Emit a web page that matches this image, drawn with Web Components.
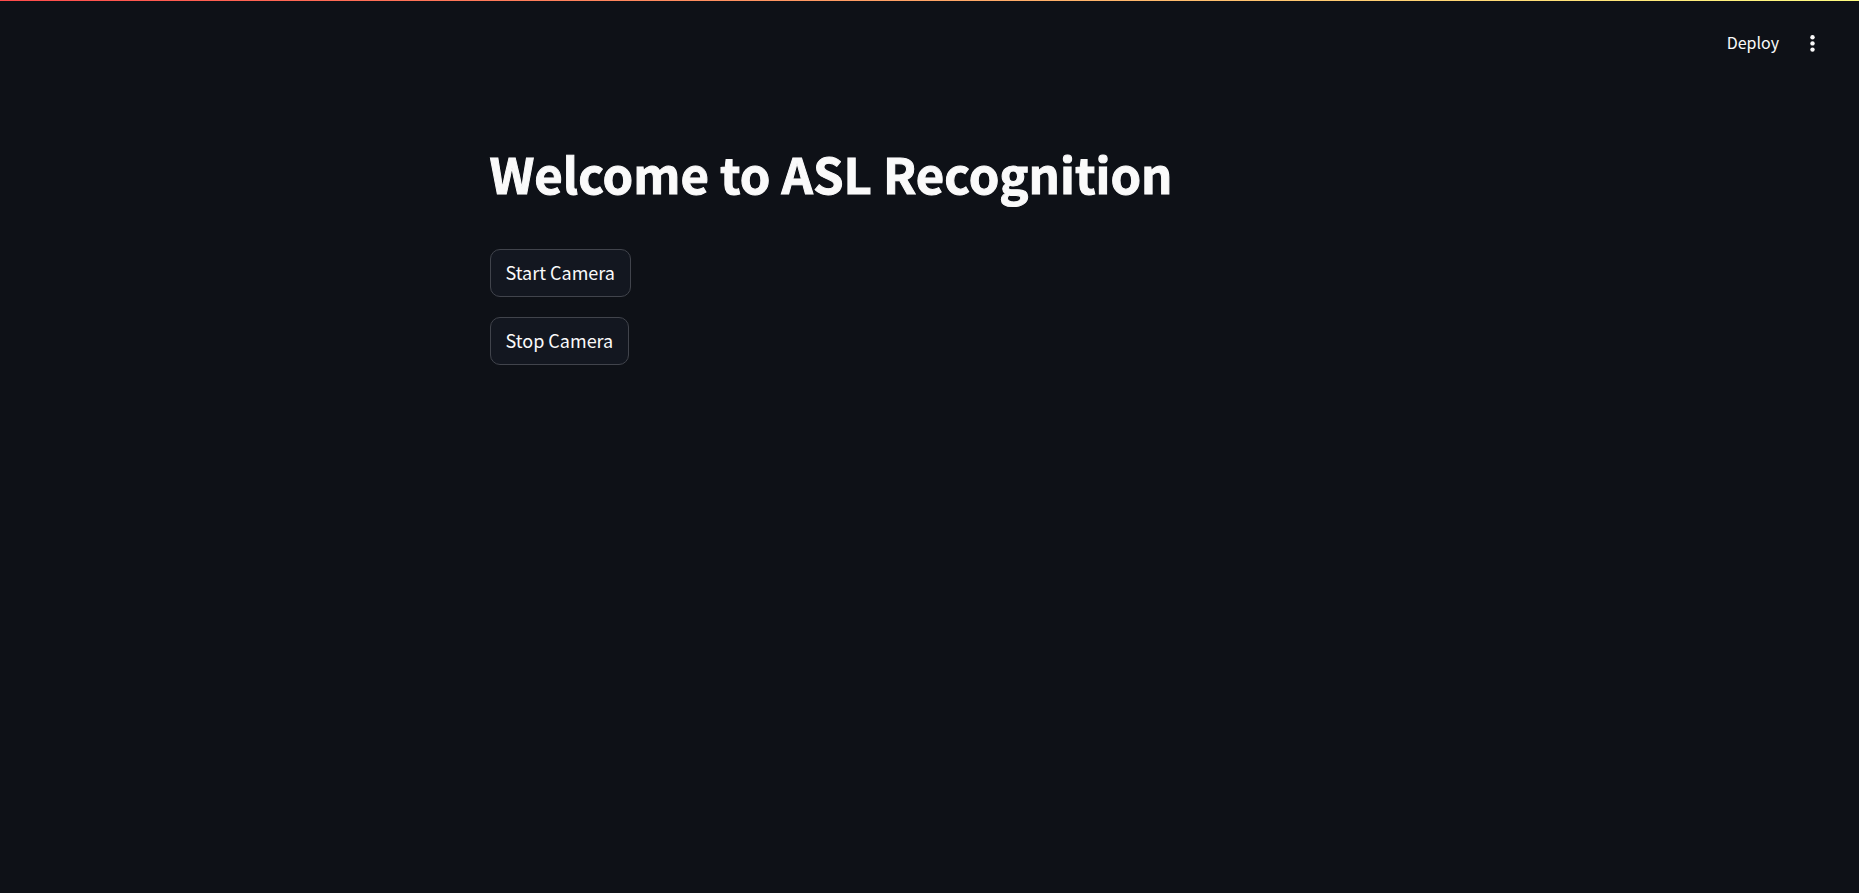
<!DOCTYPE html>
<html lang="en">
<head>
<meta charset="utf-8">
<meta name="viewport" content="width=device-width, initial-scale=1">
<title>ASL Recognition</title>
<style>
  html { background: #0e1117; color-scheme: dark; }
  body { margin: 0; color: #fafafa; font-family: "Source Sans Pro", "Noto Sans CJK SC", sans-serif; }
</style>
</head>
<body>
<app-shell>
  <app-toolbar slot="header"></app-toolbar>
  <page-title>Welcome to ASL Recognition</page-title>
  <action-button>Start Camera</action-button>
  <action-button>Stop Camera</action-button>
</app-shell>
<script>
  class BaseElement extends HTMLElement {
    constructor() {
      super();
      this.attachShadow({ mode: "open" }).innerHTML = this.constructor.markup;
    }
  }

  customElements.define("app-shell", class extends BaseElement {
    static markup = `
      <style>
        :host { display: flex; flex-direction: column; min-height: 100vh; }
        .decoration { height: 1px; background: linear-gradient(90deg, #ff4b4b, #fffd80); }
        main { box-sizing: border-box; width: 100%; max-width: 880px; margin: 0 auto; padding: 56px 0;
               display: flex; flex-direction: column; align-items: flex-start; gap: 20px; }
      </style>
      <div class="decoration"></div>
      <slot name="header"></slot>
      <main><slot></slot></main>`;
  });

  customElements.define("app-toolbar", class extends BaseElement {
    static markup = `
      <style>
        :host { display: block; }
        header { display: flex; align-items: center; justify-content: flex-end; gap: 16px;
                 height: 84px; padding: 0 32px; }
        button { box-sizing: border-box; display: flex; align-items: center; justify-content: center; height: 32px;
                 border: 0; background: none; color: inherit; font: inherit; cursor: pointer; }
        .deploy { padding: 0 4px 2px; font-size: 16px; line-height: 24px; }
        .menu { width: 28px; padding: 0; }
      </style>
      <header>
        <button class="deploy" type="button">Deploy</button>
        <button class="menu" type="button" aria-label="Main menu">
          <svg width="28" height="28" viewBox="0 0 28 28" fill="currentColor" aria-hidden="true">
            <circle cx="13.5" cy="8.3" r="2.2"/><circle cx="13.5" cy="14.4" r="2.2"/><circle cx="13.5" cy="20.6" r="2.2"/>
          </svg>
        </button>
      </header>`;
  });

  customElements.define("page-title", class extends BaseElement {
    static markup = `
      <style>
        :host { display: block; }
        h1 { margin: 0; padding: 0 0 24px; font-size: 49px; line-height: 64px; font-weight: 700;
             -webkit-text-stroke: 1px currentColor; }
      </style>
      <h1><slot></slot></h1>`;
  });

  customElements.define("action-button", class extends BaseElement {
    static markup = `
      <style>
        :host { display: block; }
        button { display: block; box-sizing: border-box; height: 48px; padding: 0 15px 2px; border: 1px solid #41444c; border-radius: 10px;
                 background: #131720; color: inherit; font: inherit; font-size: 18px; line-height: 28px; cursor: pointer; }
      </style>
      <button type="button"><slot></slot></button>`;
  });
</script>
</body>
</html>
